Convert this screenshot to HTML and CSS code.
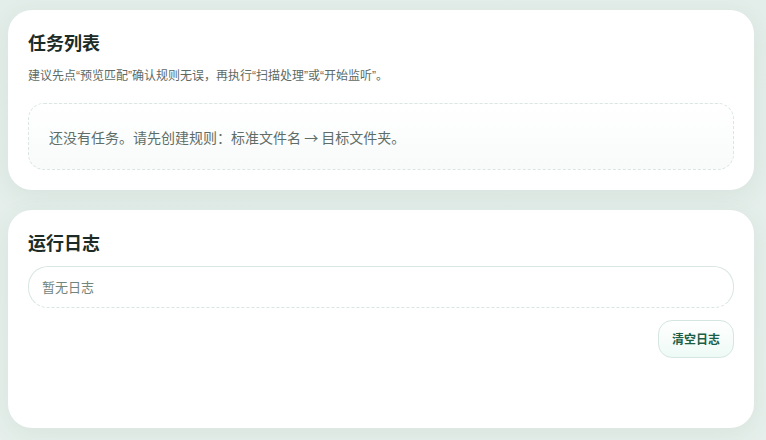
FILE: index.html
```html
<!DOCTYPE html>
<html lang="zh-CN">
<head>
    <meta charset="UTF-8">
    <meta name="viewport" content="width=device-width, initial-scale=1.0">
    <title>任务与日志</title>
    <link rel="stylesheet" href="styles.css">
</head>
<body>
    <div class="page">
        <section class="card">
            <h2>任务列表</h2>
            <p class="hint">建议先点“预览匹配”确认规则无误，再执行“扫描处理”或“开始监听”。</p>
            <div class="empty">还没有任务。请先创建规则：标准文件名 → 目标文件夹。</div>
        </section>

        <section class="card card-log">
            <h2>运行日志</h2>
            <div class="log-box">暂无日志</div>
            <div class="actions">
                <button type="button" class="btn-soft">清空日志</button>
            </div>
        </section>
    </div>
</body>
</html>
```

FILE: styles.css
```css
* {
    box-sizing: border-box;
}

body {
    margin: 0;
    font-family: "Noto Sans CJK SC", "Noto Sans", sans-serif;
    background: linear-gradient(180deg, #e3ede9 0%, #e6efeb 100%);
    color: #1d2b26;
}

.page {
    display: flex;
    flex-direction: column;
    gap: 20px;
    padding: 10px 12px 12px 8px;
}

.card {
    background-color: #fff;
    border-radius: 24px;
    padding: 20px;
    box-shadow: 0 6px 24px rgba(60, 110, 90, 0.08);
}

.card-log {
    min-height: 218px;
}

h2 {
    margin: 0 0 11px;
    font-size: 18px;
    line-height: 25px;
    font-weight: 700;
    color: #1d2b26;
}

/* narrow latin quotes, CJK for the rest */
.hint {
    margin: 0 0 18px;
    padding-top: 2px;
    font-family: "Liberation Sans", "Noto Sans CJK SC", sans-serif;
    font-size: 12px;
    line-height: 17px;
    color: #5d6a65;
}

.empty {
    border: 1px dashed #dbe6e2;
    border-radius: 16px;
    padding: 23px 20px 22px;
    font-size: 14px;
    line-height: 20px;
    color: #5f6d68;
    background: linear-gradient(180deg, #ffffff 0%, #f8fbfa 100%);
}

.log-box {
    border: 1px solid #d9e6e2;
    border-bottom-style: dashed;
    border-radius: 20px;
    padding: 11px 13px;
    font-size: 13px;
    line-height: 18px;
    color: #72857c;
}

.actions {
    display: flex;
    justify-content: flex-end;
    margin-top: 12px;
}

.btn-soft {
    font-family: inherit;
    font-size: 12px;
    font-weight: 700;
    line-height: 18px;
    color: #1b5e46;
    padding: 9px 13px;
    border: 1px solid #d4e6df;
    border-radius: 14px;
    background: linear-gradient(180deg, #ffffff 0%, #eefaf6 100%);
    cursor: pointer;
}
```
